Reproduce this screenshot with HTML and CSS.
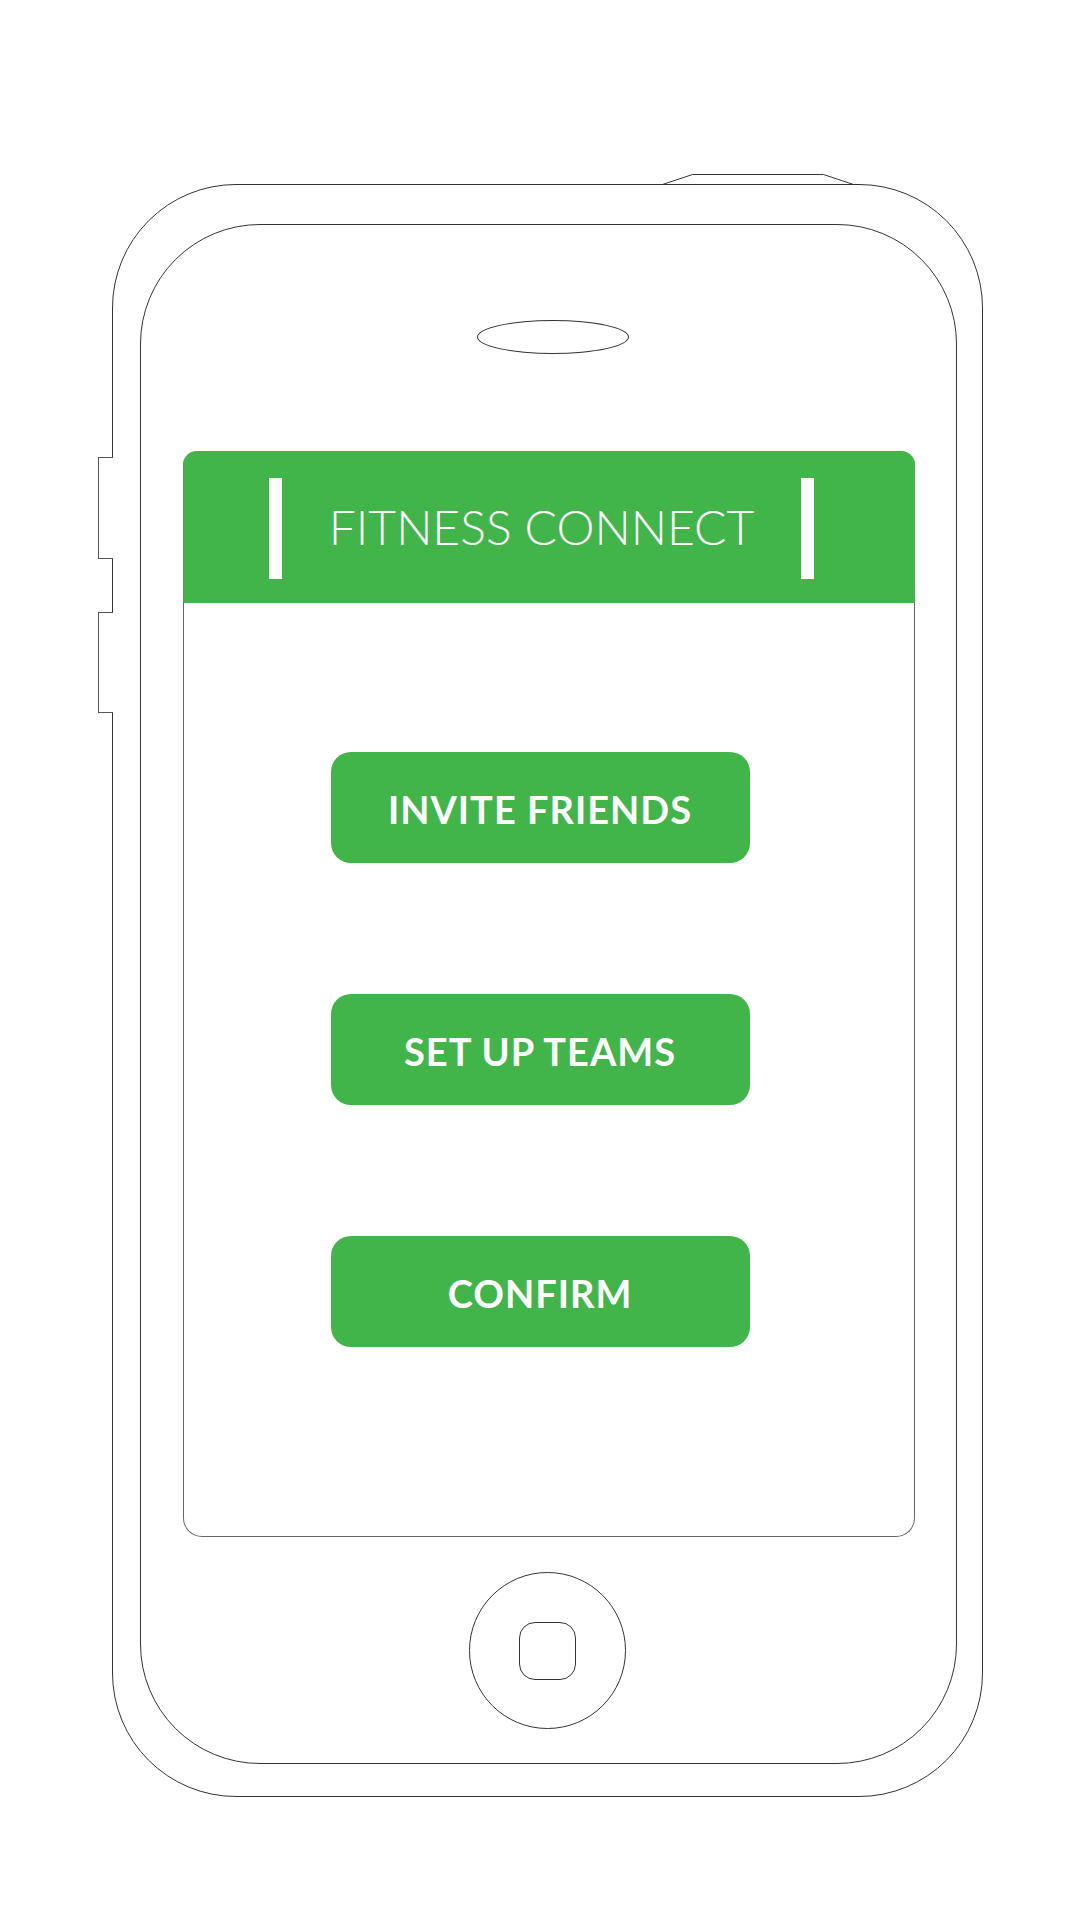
FILE: index.html
```html
<!DOCTYPE html>
<html lang="en">
<head>
<meta charset="utf-8">
<title>Fitness Connect</title>
<link rel="stylesheet" href="styles.css">
</head>
<body>
<div class="stage">
  <div class="phone">
    <svg class="top-button" width="193" height="12" viewBox="0 0 193 12">
      <path d="M0.5 11.5 L30.5 1.5 L161.5 1.5 L191.5 11.5 Z" fill="#fff" stroke="#333" stroke-width="1"/>
    </svg>
    <div class="side-button side-button-1"></div>
    <div class="side-button side-button-2"></div>
    <div class="screen">
      <div class="speaker"></div>
      <div class="card">
        <div class="card-header">
          <span class="bar"></span>
          <h1 class="title">FITNESS CONNECT</h1>
          <span class="bar"></span>
        </div>
        <div class="actions">
          <button class="action">INVITE FRIENDS</button>
          <button class="action">SET UP TEAMS</button>
          <button class="action">CONFIRM</button>
        </div>
      </div>
      <div class="home">
        <div class="home-inner"></div>
      </div>
    </div>
  </div>
</div>
</body>
</html>
```

FILE: styles.css
```css
* { box-sizing: border-box; }

html, body {
  margin: 0;
  padding: 0;
  background: #fff;
}

body {
  font-family: "Lato", "Liberation Sans", sans-serif;
  width: 1081px;
  height: 1921px;
  overflow: hidden;
}

.stage {
  padding-top: 184px;
  padding-left: 112px;
}

.phone {
  position: relative;
  width: 871px;
  height: 1613px;
  border: 1px solid #333;
  border-radius: 124px;
  padding: 39px 25px 32px 27px;
  background: #fff;
}

.top-button {
  position: absolute;
  left: 549px;
  top: -12px;
  display: block;
}

.side-button {
  position: absolute;
  left: -15px;
  width: 15px;
  border: 1px solid #555;
  border-right: none;
  background: #fff;
}

.side-button-1 { top: 272px; height: 102px; }
.side-button-2 { top: 427px; height: 101px; }

.screen {
  width: 817px;
  height: 1540px;
  border: 1px solid #333;
  border-radius: 120px;
  display: flex;
  flex-direction: column;
  align-items: center;
  padding-top: 95px;
}

.speaker {
  width: 152px;
  height: 34px;
  border: 1px solid #333;
  border-radius: 50%;
  margin-left: 8px;
  flex: none;
}

.card {
  margin-top: 97px;
  width: 732px;
  height: 1086px;
  border: 1px solid #666;
  border-top: none;
  border-radius: 15px 15px 19px 19px;
  flex: none;
}

.card-header {
  background: #41b54a;
  height: 152px;
  margin: 0 -1px;
  border-radius: 14px 14px 0 0;
  display: flex;
  align-items: center;
  justify-content: center;
  gap: 47px;
  padding-right: 14px;
}

.bar {
  width: 13px;
  height: 101px;
  background: #fff;
  flex: none;
  margin-top: 2px;
}

.title {
  margin: 0;
  color: #fff;
  font-family: "Lato", "Liberation Sans", sans-serif;
  font-weight: 300;
  font-size: 48px;
  line-height: 1;
  letter-spacing: 0;
  white-space: nowrap;
}

.actions {
  display: flex;
  flex-direction: column;
  gap: 131px;
  padding-top: 149px;
  padding-left: 147px;
}

.action {
  width: 419px;
  height: 111px;
  border: none;
  border-radius: 20px;
  background: #41b54a;
  color: #fff;
  font-family: "Lato", "Liberation Sans", sans-serif;
  font-weight: 700;
  font-size: 38px;
  letter-spacing: 1px;
  padding: 0;
  padding-top: 2px;
  cursor: pointer;
}

.home {
  margin-top: 35px;
  width: 157px;
  height: 157px;
  border: 1px solid #333;
  border-radius: 50%;
  display: flex;
  align-items: center;
  justify-content: center;
  flex: none;
  margin-left: -2px;
}

.home-inner {
  width: 57px;
  height: 58px;
  border: 1px solid #333;
  border-radius: 16px;
}
```
